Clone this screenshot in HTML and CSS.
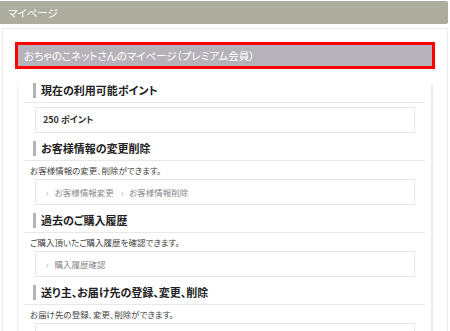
FILE: index.html
```html
<!DOCTYPE html>
<html lang="ja">
<head>
    <meta charset="UTF-8">
    <meta name="viewport" content="width=device-width, initial-scale=1.0">
    <title>マイページ</title>
    <link rel="stylesheet" href="styles.css">
</head>
<body>
    <div class="page">
        <div class="page-title">マイページ</div>

        <div class="panel">
            <h1 class="member-title">おちゃのこネットさんのマイページ（プレミアム会員）</h1>

            <div class="column">
                <div class="section">
                    <h2><span>現在の利用可能ポイント</span></h2>
                    <div class="box points">250 ポイント</div>
                </div>

                <div class="section">
                    <h2><span>お客様情報の変更削除</span></h2>
                    <p class="desc">お客様情報の変更、削除ができます。</p>
                    <div class="box links">
                        <a href="#">お客様情報変更</a>
                        <a href="#">お客様情報削除</a>
                    </div>
                </div>

                <div class="section">
                    <h2><span>過去のご購入履歴</span></h2>
                    <p class="desc">ご購入頂いたご購入履歴を確認できます。</p>
                    <div class="box links">
                        <a href="#">購入履歴確認</a>
                    </div>
                </div>

                <div class="section">
                    <h2><span>送り主、お届け先の登録、変更、削除</span></h2>
                    <p class="desc">お届け先の登録、変更、削除ができます。</p>
                    <div class="box links"></div>
                </div>
            </div>
        </div>
    </div>
</body>
</html>
```

FILE: styles.css
```css
body {
    margin: 0;
    font-family: "Noto Sans CJK JP", "Liberation Sans", sans-serif;
    font-feature-settings: "palt";
    color: #333;
    background: #fff;
    overflow: hidden;
}
.page {
    width: 448px;
    padding-top: 1px;
}
.page-title {
    height: 23px;
    line-height: 23px;
    padding-left: 8px;
    background-color: #adad9f;
    border-radius: 0 2px 2px 0;
    color: #fff;
    font-size: 10.5px;
}
.panel {
    margin: 4px 0 0 2px;
    width: 446px;
    border: 1px solid #ececec;
    padding: 16px 14px 0 14px;
    box-sizing: border-box;
    height: 320px;
}
.member-title {
    margin: 0 1px;
    height: 21px;
    line-height: 21px;
    padding-left: 6px;
    background-color: #b5b3b9;
    outline: 3px solid #f00;
    color: #fff;
    font-size: 10.5px;
    font-weight: normal;
}
.column {
    border-left: 1px solid #ededed;
    border-right: 2px solid #ededed;
    padding: 0 6px 20px 6px;
    height: 300px;
}
.section h2 {
    margin: 8px 0 0;
    padding: 0 0 4px 9px;
    border-bottom: 1px solid #e8e8e8;
    font-size: 11px;
    font-weight: bold;
    color: #222;
}
.section:first-child h2 {
    margin-top: 17px;
}
.section h2 span {
    display: block;
    line-height: 15px;
    border-left: 3px solid #b3b3b3;
    padding-left: 5px;
}
.desc {
    margin: 2px 0 0 6px;
    line-height: 14px;
    font-size: 8.5px;
    color: #444;
}
.box {
    margin: 2px 10px 0 11px;
    height: 24px;
    line-height: 24px;
    border: 1px solid #e6e6e6;
    padding-left: 7px;
}
.section:first-child .box {
    margin-top: 4px;
}
.points {
    font-size: 9px;
    font-weight: bold;
    color: #333;
}
.links {
    padding-left: 10px;
    font-size: 8.5px;
}
.links a {
    color: #888;
    text-decoration: none;
    margin-right: 5px;
}
.links a::before {
    content: "›";
    margin-right: 6px;
    color: #999;
}
```
